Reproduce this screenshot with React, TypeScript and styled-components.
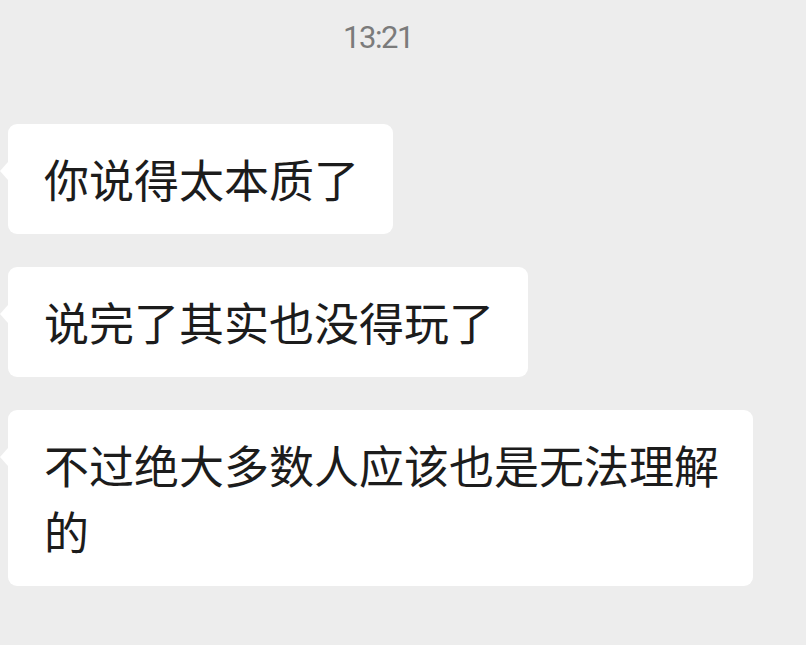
import React from "react";
import styled, { createGlobalStyle } from "styled-components";

const GlobalStyle = createGlobalStyle`
  html, body {
    margin: 0;
    padding: 0;
    background: #ededed;
  }
  body {
    font-family: "Noto Sans CJK SC", "Noto Sans", sans-serif;
  }
`;

const Page = styled.div`
  width: 806px;
  height: 645px;
  background: #ededed;
  box-sizing: border-box;
  padding-top: 18px;
  display: flex;
  flex-direction: column;
  overflow: hidden;
`;

const TimeStamp = styled.div`
  width: 756px;
  text-align: center;
  font-family: Roboto, "Liberation Sans", sans-serif;
  font-size: 31px;
  line-height: 40px;
  letter-spacing: -1.4px;
  color: #7b7b7b;
`;

const Messages = styled.div`
  display: flex;
  flex-direction: column;
  align-items: flex-start;
  gap: 33px;
  margin-top: 66px;
  padding-left: 8px;
`;

const Bubble = styled.div`
  position: relative;
  background: #ffffff;
  border-radius: 9px;
  padding: 22px 34px 22px 36px;
  max-width: 745px;
  box-sizing: border-box;
  font-family: "Noto Sans CJK SC", "Noto Sans", sans-serif;
  font-size: 45px;
  line-height: 66px;
  color: #1c1c1c;
  &::before {
    content: "";
    position: absolute;
    left: -8px;
    top: 38px;
    border-style: solid;
    border-width: 9px 8px 9px 0;
    border-color: transparent #ffffff transparent transparent;
  }
`;

const messages = [
  "你说得太本质了",
  "说完了其实也没得玩了",
  "不过绝大多数人应该也是无法理解的",
];

export default function App() {
  return (
    <>
      <GlobalStyle />
      <Page>
        <TimeStamp>13:21</TimeStamp>
        <Messages>
          {messages.map((m) => (
            <Bubble key={m}>{m}</Bubble>
          ))}
        </Messages>
      </Page>
    </>
  );
}
